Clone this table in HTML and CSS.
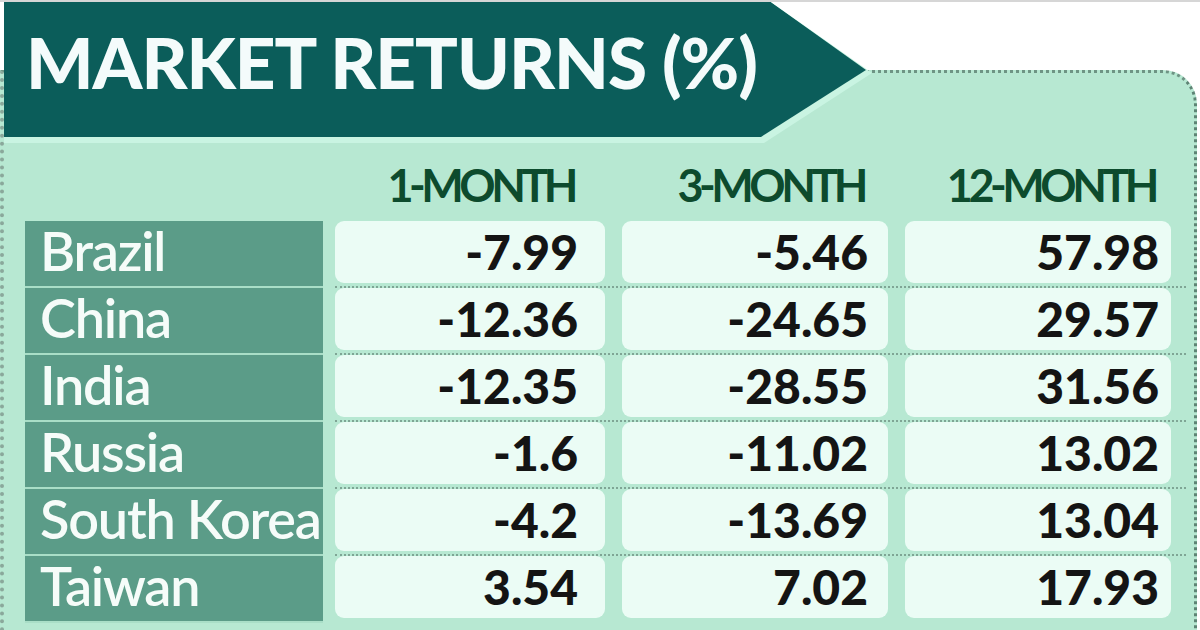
FILE: index.html
```html
<!DOCTYPE html>
<html lang="en">
<head>
<meta charset="utf-8">
<title>Market Returns</title>
<link rel="stylesheet" href="styles.css">
</head>
<body>
<div class="page">
  <div class="sheet">
    <div class="banner-edge">
      <header class="banner"><h1 class="title">MARKET RETURNS (%)</h1></header>
    </div>
    <div class="table">
      <div class="row head">
        <div class="label"></div>
        <div class="vals">
          <div class="cell">1-MONTH</div>
          <div class="cell">3-MONTH</div>
          <div class="cell">12-MONTH</div>
        </div>
      </div>
      <div class="row">
        <div class="label">Brazil</div>
        <div class="vals">
          <div class="cell">-7.99</div><div class="cell">-5.46</div><div class="cell">57.98</div>
        </div>
      </div>
      <div class="row">
        <div class="label">China</div>
        <div class="vals">
          <div class="cell">-12.36</div><div class="cell">-24.65</div><div class="cell">29.57</div>
        </div>
      </div>
      <div class="row">
        <div class="label">India</div>
        <div class="vals">
          <div class="cell">-12.35</div><div class="cell">-28.55</div><div class="cell">31.56</div>
        </div>
      </div>
      <div class="row">
        <div class="label">Russia</div>
        <div class="vals">
          <div class="cell">-1.6</div><div class="cell">-11.02</div><div class="cell">13.02</div>
        </div>
      </div>
      <div class="row">
        <div class="label">South Korea</div>
        <div class="vals">
          <div class="cell">-4.2</div><div class="cell">-13.69</div><div class="cell">13.04</div>
        </div>
      </div>
      <div class="row last">
        <div class="label">Taiwan</div>
        <div class="vals">
          <div class="cell">3.54</div><div class="cell">7.02</div><div class="cell">17.93</div>
        </div>
      </div>
    </div>
  </div>
</div>
</body>
</html>
```

FILE: styles.css
```css
* { box-sizing: border-box; }

html, body {
  margin: 0;
  padding: 0;
  background: #ffffff;
}

.page {
  width: 1200px;
  height: 630px;
  overflow: hidden;
  background: #ffffff;
  border-top: 2px solid #d6d6d6;
}

.sheet {
  margin-top: 68px;
  width: 1197px;
  height: 570px;
  background: #b7e8d2;
  border-top: 3px dotted #6e9484;
  border-right: 3px dotted #5d8474;
  border-left: 4px dotted #8aa89b;
  border-top-right-radius: 34px;
}

.banner-edge {
  margin-top: -73px;
  margin-left: 0;
  width: 868px;
  height: 143px;
  background: #c9f4e2;
  clip-path: polygon(0 0, 764px 0, 868px 73px, 760px 143px, 0 143px);
}

.banner {
  width: 862px;
  height: 137px;
  background: #0b5d5a;
  clip-path: polygon(0 0, 764px 0, 862px 70px, 757px 137px, 0 137px);
  padding: 0 0 14px 22px;
}

.title {
  margin: 0;
  font-family: "Lato", "Liberation Sans", sans-serif;
  font-weight: 900;
  font-size: 71px;
  line-height: 123px;
  color: #f4fbfb;
  letter-spacing: -1px;
  white-space: nowrap;
}

.table {
  padding-left: 21px;
}

.row {
  display: flex;
  height: 67px;
}

.row.head {
  height: 78px;
}

.label {
  width: 298px;
  height: 67px;
  flex: none;
  background: #5b9c88;
  border-bottom: 2px solid #a9dec7;
  color: #f6fcf9;
  font-family: "Lato", "Liberation Sans", sans-serif;
  font-weight: 600;
  font-size: 54px;
  line-height: 59px;
  padding-left: 15px;
  letter-spacing: -1.2px;
  white-space: nowrap;
}

.head .label {
  background: transparent;
  border-bottom: none;
}

.vals {
  flex: none;
  display: flex;
  width: 851px;
  margin-left: 12px;
  gap: 17px;
  padding-bottom: 3px;
  border-bottom: 2px dotted #7fa595;
}

.row.last .vals,
.head .vals {
  border-bottom: none;
}

.cell {
  height: 62px;
  width: 270px;
  background: #ebfcf5;
  border-radius: 9px;
  text-align: right;
  font-family: "Lato", "Liberation Sans", sans-serif;
  font-weight: 900;
  font-size: 48px;
  line-height: 62px;
  color: #141414;
  padding-top: 0;
}

.cell:nth-child(1) { padding-right: 27px; }
.cell:nth-child(2) { width: 266px; padding-right: 20px; }
.cell:nth-child(3) { width: 266px; padding-right: 12px; }

.head .vals {
  align-items: flex-end;
  padding-bottom: 12px;
}

.head .cell {
  background: transparent;
  height: 48px;
  line-height: 48px;
  font-size: 45px;
  font-weight: 700;
  color: #0d4b2d;
  letter-spacing: -4.5px;
}

.head .cell:nth-child(1) { padding-right: 31px; }
.head .cell:nth-child(2) { padding-right: 24px; }
.head .cell:nth-child(3) { padding-right: 16px; }
```
